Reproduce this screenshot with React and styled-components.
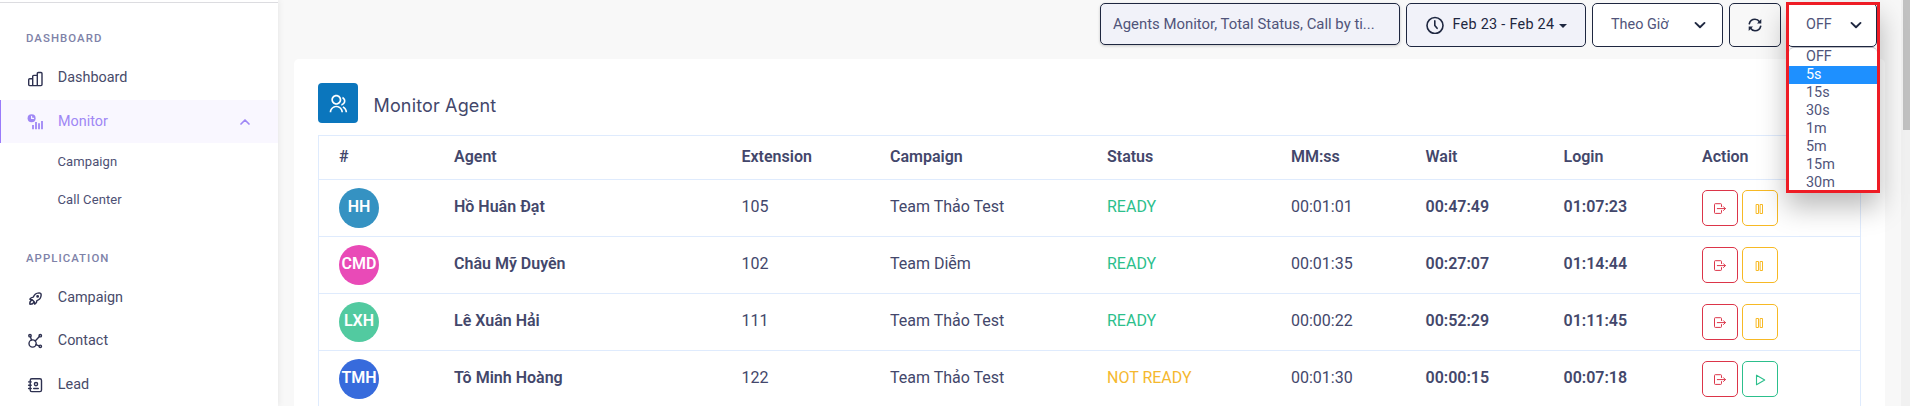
import React from "react";
import styled, { createGlobalStyle } from "styled-components";
import { RiGroupLine } from "react-icons/ri";
import { TbRocket } from "react-icons/tb";

const Global = createGlobalStyle`
  * { box-sizing: border-box; }
  html, body { margin: 0; height: 100%; overflow: hidden; background: #f8f8f8; }
  body { font-family: Roboto, "Noto Sans", sans-serif; color: #43476b; }
`;

const Page = styled.div`
  display: flex;
  height: 406px;
  overflow: hidden;
`;

/* ---- sidebar ---- */
const Sidebar = styled.nav`
  flex: none;
  width: 278px;
  height: 100%;
  padding-top: 2px;
  background: #fff;
  box-shadow: 0 0 7px rgba(0, 0, 0, 0.09);
`;
const SidebarRule = styled.div`
  height: 1px;
  background: #dcdce0;
`;
const SectionTitle = styled.div`
  height: 14px;
  margin: ${(p) => p.$margin};
  padding-left: 26px;
  font-size: 11.4px;
  line-height: 14px;
  font-weight: 500;
  letter-spacing: 1.05px;
  color: #7e82a8;
`;
const NavItem = styled.a`
  display: flex;
  align-items: center;
  height: ${(p) => p.$height || 43}px;
  padding: 0 27px 0 ${(p) => (p.$active ? 26 : 27)}px;
  border-left: ${(p) => (p.$active ? "1px solid #9a7bfa" : "0")};
  background: ${(p) => (p.$active ? "#f9f7ff" : "transparent")};
  color: ${(p) => (p.$active ? "#9f87f5" : "#484b6a")};
  font-size: 14.4px;
  svg { flex: none; }
`;
const NavIcon = styled.span`
  display: flex;
  width: ${(p) => (p.$active ? 31 : 30.8)}px;
  padding-top: ${(p) => p.$drop || 0}px;
  color: ${(p) => (p.$active ? "#9f87f5" : "#2d3050")};
`;
const NavLabel = styled.span`
  flex: 1;
`;
const SubItem = styled.a`
  display: flex;
  align-items: center;
  height: 37.5px;
  padding-left: 57.5px;
  font-size: 13px;
  letter-spacing: 0.1px;
  color: #4d5074;
`;

/* ---- main column ---- */
const Main = styled.main`
  flex: 1;
  display: flex;
  flex-direction: column;
  padding: 3px 16px 0;
`;
const Toolbar = styled.div`
  flex: none;
  display: flex;
  justify-content: flex-end;
  gap: 6px;
  height: 56px;
  padding-right: 8px;
`;
const Control = styled.div`
  display: flex;
  align-items: center;
  width: ${(p) => p.$width}px;
  height: ${(p) => p.$height || 44}px;
  padding: ${(p) => p.$padding};
  border: 1px solid #1e2740;
  border-radius: 5px;
  background: ${(p) => p.$bg || "#fff"};
  box-shadow: ${(p) => (p.$raised ? "0 1px 3px rgba(0,0,0,.2)" : "none")};
  color: ${(p) => p.$color || "#50547a"};
  font-size: ${(p) => p.$size || 14.4}px;
  line-height: 18px;
  white-space: nowrap;
  svg { flex: none; color: #1e2740; }
`;
const ControlText = styled.span`
  flex: ${(p) => (p.$grow ? 1 : "none")};
  margin-left: ${(p) => p.$indent || 0}px;
  letter-spacing: ${(p) => p.$spacing || 0}px;
`;
const Caret = styled.i`
  margin: 2px 0 0 5px;
  border: 4px solid transparent;
  border-top-color: #1e2740;
  border-bottom: 0;
`;
const IntervalSelect = styled.div`
  position: relative;
  width: 90px;
`;
const IntervalMenu = styled.div`
  position: absolute;
  top: -1px;
  left: -1px;
  width: 94px;
  height: 191px;
  padding-top: 42px;
  border: 3px solid #ee1c25;
  box-shadow: 0 14px 26px rgba(0, 0, 0, 0.27);
  z-index: 2;
`;
const OptionList = styled.ul`
  margin: 0;
  padding: 0;
  border-top: 1px solid #b9bac2;
  border-radius: 5px 5px 2px 2px;
  background: #fff;
  list-style: none;
`;
const Option = styled.li`
  height: 18px;
  padding-left: 17px;
  font-size: 14.4px;
  line-height: 18px;
  color: ${(p) => (p.$on ? "#fff" : "#50547a")};
  background: ${(p) => (p.$on ? "#1e90ff" : "transparent")};
  &:last-child { height: 16px; }
`;

const Card = styled.section`
  width: 1591px;
  flex: 1;
  padding: 24px 24px 0;
  border-radius: 5px 5px 0 0;
  background: #fff;
`;
const CardHead = styled.header`
  display: flex;
  align-items: center;
  gap: 15.5px;
  height: 52px;
  padding-bottom: 12px;
`;
const CardIcon = styled.span`
  display: grid;
  place-items: center;
  width: 40px;
  height: 40px;
  border-radius: 4px;
  background: #0b76bd;
  color: #fff;
  padding-top: 2px;
`;
const CardTitle = styled.h1`
  margin: 6px 0 0;
  font: 400 18px/24px Inter, "Noto Sans", sans-serif;
  letter-spacing: 0.15px;
`;

const Table = styled.div`
  width: 1543px;
  border: 1px solid #dfebfd;
  border-bottom: 0;
  font-size: 16px;
`;
const Row = styled.div`
  display: grid;
  grid-template-columns: 115px 287.5px 148.5px 217px 184px 134.5px 138px 138.5px 1fr;
  align-items: center;
  height: ${(p) => (p.$head ? 44 : 57)}px;
  padding-left: 20px;
  border-bottom: 1px solid #dfebfd;
`;
const Cell = styled.div`
  padding-bottom: 3px;
  line-height: 22px;
  white-space: nowrap;
  font-weight: ${(p) => (p.$bold ? 600 : 400)};
  color: ${(p) => p.$color || "#43476b"};
`;
const HeadCell = styled(Cell)`
  padding-bottom: 1px;
  font-weight: 600;
`;
const Avatar = styled.div`
  display: flex;
  align-items: center;
  justify-content: center;
  width: 40px;
  height: 40px;
  padding-bottom: 4px;
  border-radius: 50%;
  background: ${(p) => p.$color};
  color: #fff;
  font-weight: 600;
`;
const Actions = styled.div`
  display: flex;
  gap: 4px;
`;
const ActionButton = styled.button`
  display: grid;
  place-items: center;
  width: 36px;
  height: 36px;
  padding: 1px 0 0;
  border: 1px solid ${(p) => p.$color};
  border-radius: 5px;
  background: transparent;
  color: ${(p) => p.$color};
`;

const Track = styled.div`
  flex: none;
  width: 9px;
  height: 100%;
  padding-left: 2px;
  background: #f1f1f1;
`;
const Thumb = styled.div`
  height: 130px;
  background: #c1c1c1;
`;

/* ---- icons ---- */
const Svg = ({ s = 16, w = 1.4, children, vb = 16 }) => (
  <svg width={s} height={s} viewBox={`0 0 ${vb} ${vb}`} fill="none" stroke="currentColor" strokeWidth={w} strokeLinecap="round" strokeLinejoin="round">
    {children}
  </svg>
);
const BarsIcon = () => (
  <Svg>
    <path d="M1.7 8.7q0-1 1-1h3v6.900h-3q-1 0-1-1zM5.700 14.600V5.400q0-1 1-1h3.600v10.200zM10.300 14.600V2.500q0-1 1-1h2.700q1 0 1 1v11.100q0 1-1 1z" />
  </Svg>
);
const MonitorIcon = () => (
  <Svg>
    <circle cx="4.6" cy="4.2" r="4" fill="currentColor" stroke="none" />
    <path d="M4.6 2.200v2.200h2" stroke="#f9f7ff" strokeWidth="1.100" />
    <path d="M6 11v4.300M9 8v7.300M12 9.200v6.100M15 7v8.300" strokeWidth="1.800" strokeLinecap="butt" />
  </Svg>
);
const HubIcon = () => (
  <Svg w={1.400}>
    <circle cx="5.6" cy="10.500" r="3.600" />
    <circle cx="3" cy="2.700" r="1.200" />
    <circle cx="13.300" cy="2.700" r="1.200" />
    <circle cx="13.300" cy="13.300" r="1.200" />
    <path d="M3.400 3.900 4.600 7M12.400 3.600 8.200 8M9 11.600l3.100 1.200" />
  </Svg>
);
const BookIcon = () => (
  <Svg w={1.400}>
    <rect x="3.200" y="1.800" width="11.300" height="12.800" rx="1.600" />
    <path d="M1.600 4.900h2.600M1.600 8.200h2.600M1.600 11.500h2.600M6.700 11.500h4.600" />
    <circle cx="9" cy="7.100" r="1.600" />
  </Svg>
);
const UpIcon = () => (
  <Svg s={12} vb={12} w={1.700}>
    <path d="M2 8l4-4 4 4" />
  </Svg>
);
const ClockIcon = () => (
  <Svg s={18} vb={18} w={1.600}>
    <circle cx="9" cy="9.500" r="8" />
    <path d="M8.800 4.900v4.600l2.300 2.800" />
  </Svg>
);
const RefreshIcon = () => (
  <Svg s={14} vb={14} w={1.600}>
    <path d="M1.300 5.800C2 3 4.200 1.300 7 1.300c2 0 3.500.9 4.500 2.400M12.700 8.200C12 11 9.800 12.700 7 12.700c-2 0-3.500-.9-4.500-2.400" />
    <path d="M13.300 1v4.400H9zM.7 13V8.600H5z" fill="currentColor" stroke="none" />
  </Svg>
);
const DownIcon = () => (
  <Svg s={12} vb={12} w={1.900}>
    <path d="M1.500 3.900 6 8.300l4.500-4.400" />
  </Svg>
);
const LogoutIcon = () => (
  <Svg s={12} vb={12} w={1}>
    <path d="M7.500 3.500V1.500q0-.8-.8-.8H1.300q-.8 0-.8.8v8q0 .9.8.9h5.400q.8 0 .8-.9v-1.900M3.300 5.600h8M9.500 3.700l1.900 1.900-1.900 1.900" />
  </Svg>
);
const PauseIcon = () => (
  <Svg s={12} vb={12} w={1}>
    <path d="M2.500 1.500h2v9h-2zM6.500 1.500h2v9h-2z" />
  </Svg>
);
const PlayIcon = () => (
  <Svg s={12} vb={12} w={1.100}>
    <path d="M2.500 1.200v9.600L10.700 6z" />
  </Svg>
);

const rows = [
  ["HH", "#3592c2", "Hồ Huân Đạt", "105", "Team Thảo Test", "READY", "00:01:01", "00:47:49", "01:07:23"],
  ["CMD", "#e94ab7", "Châu Mỹ Duyên", "102", "Team Diễm", "READY", "00:01:35", "00:27:07", "01:14:44"],
  ["LXH", "#52caa0", "Lê Xuân Hải", "111", "Team Thảo Test", "READY", "00:00:22", "00:52:29", "01:11:45"],
  ["TMH", "#376bdc", "Tô Minh Hoàng", "122", "Team Thảo Test", "NOT READY", "00:01:30", "00:00:15", "00:07:18"],
];
const heads = ["#", "Agent", "Extension", "Campaign", "Status", "MM:ss", "Wait", "Login", "Action"];
const intervals = ["OFF", "5s", "15s", "30s", "1m", "5m", "15m", "30m"];

export default function App() {
  return (
    <Page>
      <Global />
      <Sidebar>
        <SidebarRule />
        <SectionTitle $margin="28px 0 10px">DASHBOARD</SectionTitle>
        <NavItem $height={45}>
          <NavIcon $drop={3}><BarsIcon /></NavIcon>
          <NavLabel>Dashboard</NavLabel>
        </NavItem>
        <NavItem $active>
          <NavIcon $active><MonitorIcon /></NavIcon>
          <NavLabel>Monitor</NavLabel>
          <UpIcon />
        </NavItem>
        <SubItem>Campaign</SubItem>
        <SubItem>Call Center</SubItem>
        <SectionTitle $margin="33px 0 11px">APPLICATION</SectionTitle>
        <NavItem $height={43}>
          <NavIcon $drop={1}><TbRocket size={17} /></NavIcon>
          <NavLabel>Campaign</NavLabel>
        </NavItem>
        <NavItem $height={43.5}>
          <NavIcon $drop={1}><HubIcon /></NavIcon>
          <NavLabel>Contact</NavLabel>
        </NavItem>
        <NavItem $height={43.5}>
          <NavIcon $drop={1}><BookIcon /></NavIcon>
          <NavLabel>Lead</NavLabel>
        </NavItem>
      </Sidebar>
      <Main>
        <Toolbar>
          <Control $width={300} $height={42} $padding="0 12px" $bg="#f1f2f9" $size={14.9} $raised>
            <ControlText>Agents Monitor, Total Status, Call by ti...</ControlText>
          </Control>
          <Control $width={180} $padding="0 0 0 19px" $bg="#f1f2f9" $color="#1e2740">
            <ClockIcon />
            <ControlText $indent={8.5} $spacing={0.28}>Feb 23 - Feb 24</ControlText>
            <Caret />
          </Control>
          <Control $width={131} $padding="0 16px 0 18px">
            <ControlText $grow>Theo Giờ</ControlText>
            <DownIcon />
          </Control>
          <Control $width={52} $padding="0 0 0 18px" $bg="#f8f8f8">
            <RefreshIcon />
          </Control>
          <IntervalSelect>
            <Control $width={90} $padding="0 14px 0 18px">
              <ControlText $grow>OFF</ControlText>
              <DownIcon />
            </Control>
            <IntervalMenu>
              <OptionList>
                {intervals.map((t) => (
                  <Option key={t} $on={t === "5s"}>{t}</Option>
                ))}
              </OptionList>
            </IntervalMenu>
          </IntervalSelect>
        </Toolbar>
        <Card>
          <CardHead>
            <CardIcon><RiGroupLine size={20} /></CardIcon>
            <CardTitle>Monitor Agent</CardTitle>
          </CardHead>
          <Table>
            <Row $head>
              {heads.map((h) => <HeadCell key={h}>{h}</HeadCell>)}
            </Row>
            {rows.map(([ini, color, name, ext, camp, status, mm, wait, login]) => (
              <Row key={ini}>
                <Avatar $color={color}>{ini}</Avatar>
                <Cell $bold>{name}</Cell>
                <Cell>{ext}</Cell>
                <Cell>{camp}</Cell>
                <Cell $color={status === "READY" ? "#2cbf8c" : "#f5b82e"}>{status}</Cell>
                <Cell>{mm}</Cell>
                <Cell $bold>{wait}</Cell>
                <Cell $bold>{login}</Cell>
                <Actions>
                  <ActionButton $color="#dc3549"><LogoutIcon /></ActionButton>
                  {status === "READY" ? (
                    <ActionButton $color="#f7b924"><PauseIcon /></ActionButton>
                  ) : (
                    <ActionButton $color="#2cbf8c"><PlayIcon /></ActionButton>
                  )}
                </Actions>
              </Row>
            ))}
          </Table>
        </Card>
      </Main>
      <Track><Thumb /></Track>
    </Page>
  );
}
